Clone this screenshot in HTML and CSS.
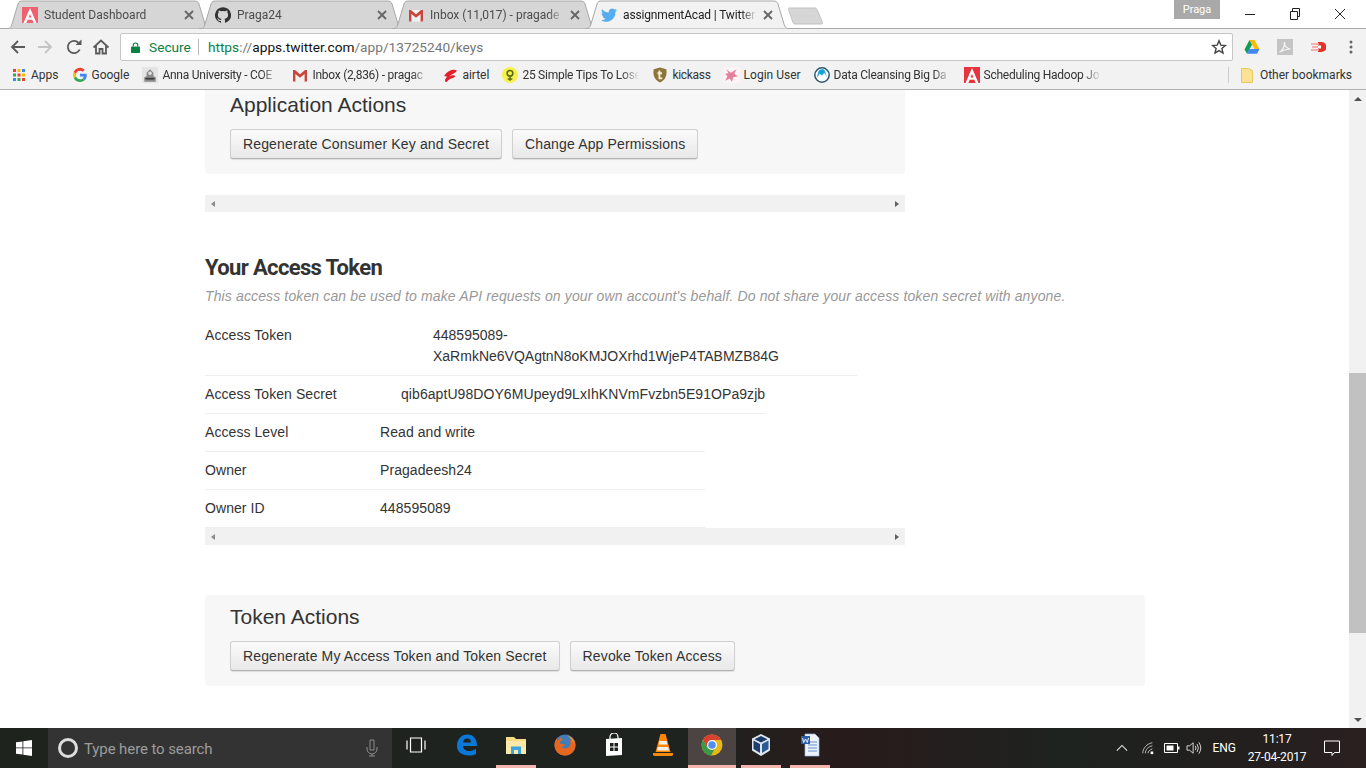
FILE: index.html
```html
<!DOCTYPE html>
<html>
<head>
    <title>assignmentAcad | Twitter Apps</title>
    <link rel="stylesheet" href="styles.css">
</head>
<body>
    <svg class="defs" width="0" height="0">
        <symbol id="fav-a" viewBox="0 0 16 16">
            <rect width="16" height="16" fill="#f0616f"/>
            <path d="M1.500 16 8 1l6.500 15h-2.800L8 7 4.300 16z" fill="#fff"/>
            <path d="M5 10.500h6v2.200H5z" fill="#fff"/>
        </symbol>
        <symbol id="fav-a-strong" viewBox="0 0 16 16">
            <rect width="16" height="16" fill="#e8343f"/>
            <path d="M1.500 16 8 1l6.500 15h-2.800L8 7 4.300 16z" fill="#fff"/>
            <path d="M5 10.500h6v2.200H5z" fill="#fff"/>
        </symbol>
        <symbol id="fav-gmail" viewBox="0 0 16 16">
            <path d="M1 3h14v11.500H1z" fill="#f1f1f1"/>
            <path d="M1 14.500V3h2l5 4.300L13 3h2v11.500h-2.400V7L8 10.800 3.400 7v7.500z" fill="#c9463d"/>
        </symbol>
        <symbol id="tab-shape" viewBox="0 0 205 29" preserveAspectRatio="none">
            <path d="M0 29C4 29 5 27 6 24L12 4C13 1.500 14 1 17 1H188C191 1 192 1.500 193 4L199 24C200 27 201 29 205 29z"/>
        </symbol>
    </svg>

    <header class="tabstrip">
        <div class="tab">
            <svg class="tab-bg"><use href="#tab-shape"/></svg>
            <svg class="favicon"><use href="#fav-a"/></svg>
            <span class="tab-title">Student Dashboard</span>
            <svg class="tab-close" viewBox="0 0 10 10"><path d="M1 1l8 8M9 1l-8 8"/></svg>
        </div>
        <div class="tab">
            <svg class="tab-bg"><use href="#tab-shape"/></svg>
            <svg class="favicon" viewBox="0 0 16 16"><path d="M8 .2a8 8 0 0 0-2.500 15.600c.4.1.5-.2.5-.4v-1.400c-2.200.5-2.700-1-2.700-1-.4-.9-.9-1.200-.9-1.200-.7-.5.1-.5.1-.5.8.1 1.200.8 1.200.8.7 1.200 1.900.9 2.300.7.1-.5.300-.9.500-1.100-1.800-.2-3.600-.9-3.600-4 0-.9.300-1.600.800-2.100-.1-.2-.4-1 .1-2.100 0 0 .7-.2 2.200.8a7.600 7.600 0 0 1 4 0c1.500-1 2.200-.8 2.200-.8.4 1.100.2 1.900.1 2.100.5.600.8 1.300.8 2.100 0 3.100-1.900 3.800-3.700 4 .3.300.6.800.6 1.500v2.200c0 .2.100.5.600.4A8 8 0 0 0 8 .2z" fill="#333"/></svg>
            <span class="tab-title">Praga24</span>
            <svg class="tab-close" viewBox="0 0 10 10"><path d="M1 1l8 8M9 1l-8 8"/></svg>
        </div>
        <div class="tab">
            <svg class="tab-bg"><use href="#tab-shape"/></svg>
            <svg class="favicon"><use href="#fav-gmail"/></svg>
            <span class="tab-title">Inbox (11,017) - pragade</span>
            <svg class="tab-close" viewBox="0 0 10 10"><path d="M1 1l8 8M9 1l-8 8"/></svg>
        </div>
        <div class="tab tab-active">
            <svg class="tab-bg"><use href="#tab-shape"/></svg>
            <svg class="favicon" viewBox="0 0 16 16"><path d="M16 3.100c-.6.3-1.200.4-1.900.5.700-.4 1.200-1 1.400-1.800-.6.400-1.300.6-2.100.8a3.300 3.300 0 0 0-5.600 3C5.100 5.500 2.700 4.200 1.100 2.200.2 3.700.7 5.600 2.100 6.600c-.5 0-1-.2-1.500-.4 0 1.600 1.100 3 2.600 3.300-.5.100-1 .1-1.500 0 .4 1.300 1.600 2.200 3.100 2.300A6.600 6.600 0 0 1 0 13.200 9.300 9.300 0 0 0 14.400 4.900c.6-.4 1.200-1 1.600-1.800z" fill="#55acee"/></svg>
            <span class="tab-title">assignmentAcad | Twitter</span>
            <svg class="tab-close" viewBox="0 0 10 10"><path d="M1 1l8 8M9 1l-8 8"/></svg>
        </div>
        <svg class="new-tab" viewBox="0 0 36 18"><path d="M1 1h26c1 0 1.500.5 2 1.500l5.500 13c.3 1 0 1.500-1 1.500H7c-1 0-1.500-.5-2-1.500L.5 2.500C.2 1.500 0 1 1 1z"/></svg>

        <div class="profile">Praga</div>
        <div class="win-controls">
            <svg viewBox="0 0 12 12"><path d="M1 6.500h10"/></svg>
            <svg viewBox="0 0 12 12"><path d="M1.500 3.500h7v8h-7zM3.500 3.500v-3h7v8h-2"/></svg>
            <svg viewBox="0 0 12 12"><path d="M1 1l10 10M11 1L1 11"/></svg>
        </div>
    </header>

    <nav class="toolbar">
        <svg class="tool" viewBox="0 0 16 16"><path class="nav-stroke" d="M15 8H2M8 2 2 8l6 6"/></svg>
        <svg class="tool tool-off" viewBox="0 0 16 16"><path class="nav-stroke" d="M1 8h13M8 2l6 6-6 6"/></svg>
        <svg class="tool tool-reload" viewBox="0 0 16 16"><path class="nav-stroke" d="M13.700 10.500A6.200 6.200 0 1 1 12.600 3.800"/><path d="M9.500 6h6V.5z" fill="#5a5a5a"/></svg>
        <svg class="tool" viewBox="0 0 16 16"><path class="nav-stroke" d="M.5 8.500 8 1.500l7.500 7M3 7v7.500h3.500V10h3v4.500H13V7"/></svg>
        <div class="omnibox">
            <svg class="lock" viewBox="0 0 10 12"><path d="M2.500 5V3.500a2.500 2.500 0 0 1 5 0V5" fill="none" stroke="#0b8043" stroke-width="1.300"/><rect y="5" width="10" height="7" rx=".8" fill="#0b8043"/></svg>
            <span class="secure">Secure</span>
            <span class="omni-sep"></span>
            <span class="url"><span class="url-scheme">https</span><span class="url-path">://</span>apps.twitter.com<span class="url-path">/app/13725240/keys</span></span>
            <svg class="star" viewBox="0 0 16 16"><path d="M8 1.800l1.800 4.300 4.600.4-3.500 3 1.100 4.500L8 11.600 4 14l1.100-4.500-3.500-3 4.600-.4z"/></svg>
        </div>
        <svg class="ext ext-first" viewBox="0 0 16 16"><path d="M5.500 1h5l5 9h-5z" fill="#fbbc05"/><path d="M5.500 1 .5 10.500l2.500 4.300 5-9z" fill="#0f9d58"/><path d="M3 14.800h10l2.500-4.800h-10z" fill="#4285f4"/></svg>
        <svg class="ext" viewBox="0 0 16 16"><rect width="16" height="16" fill="#c4c4c4"/><path d="M2.500 13c3-1.500 5-5.500 5-10 0 4 2 6.500 6 7-3.500 0-7 1-11 3z" fill="none" stroke="#f4f4f4" stroke-width="1.200"/></svg>
        <svg class="ext" viewBox="0 0 16 16"><path d="M8 3h3.500a5 5 0 0 1 0 10H8z" fill="#e4322b"/><path d="M1 5h8M2 8h8M1 11h8" stroke="#f59a94" stroke-width="1.300"/><path d="M8 6.500h3v3H8z" fill="#fff"/></svg>
        <svg class="ext menu-dots" viewBox="0 0 16 16"><circle cx="8" cy="3" r="1.500"/><circle cx="8" cy="8" r="1.500"/><circle cx="8" cy="13" r="1.500"/></svg>
    </nav>

    <div class="bookmarks">
        <div class="bm">
            <svg class="bm-icon" viewBox="0 0 16 16">
                <path d="M2 2h3v3H2z" fill="#ea4335"/><path d="M6.500 2h3v3h-3z" fill="#fbbc05"/><path d="M11 2h3v3h-3z" fill="#4285f4"/>
                <path d="M2 6.500h3v3H2z" fill="#34a853"/><path d="M6.500 6.500h3v3h-3z" fill="#ea4335"/><path d="M11 6.500h3v3h-3z" fill="#fbbc05"/>
                <path d="M2 11h3v3H2z" fill="#4285f4"/><path d="M6.500 11h3v3h-3z" fill="#34a853"/><path d="M11 11h3v3h-3z" fill="#ea4335"/>
            </svg>
            <span>Apps</span>
        </div>
        <div class="bm">
            <svg class="bm-icon" viewBox="0 0 14 14">
                <path d="M12.900 7.200c0-.4 0-.9-.1-1.300H7v2.500h3.300a2.900 2.900 0 0 1-1.200 1.800l1.900 1.500c1.200-1 1.900-2.600 1.900-4.500z" fill="#4285f4"/>
                <path d="M7 13.200c1.700 0 3-.6 4-1.500l-1.900-1.500c-.5.400-1.200.6-2.100.6-1.600 0-3-1.100-3.500-2.600l-2 1.500a6 6 0 0 0 5.500 3.500z" fill="#34a853"/>
                <path d="M3.500 8.200a3.600 3.600 0 0 1 0-2.400l-2-1.600a6 6 0 0 0 0 5.500z" fill="#fbbc05"/>
                <path d="M7 3.200c.9 0 1.700.3 2.400.9l1.700-1.700A6 6 0 0 0 1.500 4.200l2 1.600C4 4.300 5.400 3.200 7 3.200z" fill="#ea4335"/>
            </svg>
            <span>Google</span>
        </div>
        <div class="bm">
            <svg class="bm-icon" viewBox="0 0 14 14"><rect width="14" height="14" fill="#e4e4e4"/><path d="M2 13V9l2-1V5l3-3 3 3v3l2 1v4z" fill="#8a8a8a"/><path d="M3 9.500h8v1.500H3z" fill="#3c3c3c"/><circle cx="7" cy="5.500" r="1.500" fill="#e4e4e4"/></svg>
            <span class="bm-clip">Anna University - COE</span>
        </div>
        <div class="bm">
            <svg class="bm-icon"><use href="#fav-gmail"/></svg>
            <span class="bm-clip">Inbox (2,836) - pragac</span>
        </div>
        <div class="bm">
            <svg class="bm-icon" viewBox="0 0 14 14"><path d="M2 7.500C5 3 10 1.500 13 3c-1 2.500-5 3-6.500 5.500 2-1.500 4.500-1.500 5-.5-1 2-4 1.500-6 3.500-1 1-1.500 2-2.500 1.500C2 12 3 10 4.500 8.500 3.500 8.500 2.500 8.500 2 7.500z" fill="#e3202c"/></svg>
            <span>airtel</span>
        </div>
        <div class="bm">
            <svg class="bm-icon" viewBox="0 0 14 14"><circle cx="7" cy="7" r="7" fill="#f4f24e"/><circle cx="7" cy="5.500" r="2.500" fill="none" stroke="#5f6a1a" stroke-width="1.400"/><path d="M7 8v4M5 10.500h4" stroke="#5f6a1a" stroke-width="1.300"/></svg>
            <span class="bm-clip">25 Simple Tips To Lose</span>
        </div>
        <div class="bm">
            <svg class="bm-icon" viewBox="0 0 14 14"><path d="M1.500 2 7 .5 12.500 2c1 5.500-1 9.500-5.500 11.500C2.500 11.500.5 7.500 1.500 2z" fill="#8c7536"/><path d="M6.500 3v7h2.500M4.800 5.500h4" fill="none" stroke="#f4efe0" stroke-width="1.600"/></svg>
            <span class="bm-tight">kickass</span>
        </div>
        <div class="bm">
            <svg class="bm-icon" viewBox="0 0 14 14"><rect width="14" height="14" fill="#fbf3f5"/><path d="M2 2l4 3 5-3-2 4 3 2-4 1-1 4-2-3-4 2 2-4-2-2 3-.5z" fill="#e57f9c"/></svg>
            <span>Login User</span>
        </div>
        <div class="bm">
            <svg class="bm-icon" viewBox="0 0 14 14"><circle cx="7" cy="7" r="6.300" fill="#fff" stroke="#2a5870" stroke-width="1.300"/><path d="M2.500 9.500 5 6l2 1.500L9 5l2.500 4.500C9.500 4 10 2 7 2S3.500 5 2.500 9.500z" fill="#13a2dd"/></svg>
            <span class="bm-clip">Data Cleansing Big Da</span>
        </div>
        <div class="bm">
            <svg class="bm-icon"><use href="#fav-a-strong"/></svg>
            <span class="bm-clip">Scheduling Hadoop Jo</span>
        </div>
        <div class="bm-sep"></div>
        <div class="bm bm-other">
            <svg class="folder" viewBox="0 0 12 16"><path d="M.5 1.500h7l4 2v12H.5z" fill="#fde293" stroke="#e8c565"/></svg>
            <span>Other bookmarks</span>
        </div>
    </div>

    <div class="viewport">
        <main class="content">
            <section class="well well-top">
                <h3>Application Actions</h3>
                <div class="actions">
                    <button class="btn">Regenerate Consumer Key and Secret</button>
                    <button class="btn">Change App Permissions</button>
                </div>
            </section>
            <div class="hscroll hscroll-first"><span class="arrow-left"></span><span class="arrow-right"></span></div>

            <h2>Your Access Token</h2>
            <p class="hint">This access token can be used to make API requests on your own account's behalf. Do not share your access token secret with anyone.</p>

            <div class="row row-token">
                <span class="key">Access Token</span>
                <span class="val">448595089-<br>XaRmkNe6VQAgtnN8oKMJOXrhd1WjeP4TABMZB84G</span>
            </div>
            <div class="row row-secret">
                <span class="key">Access Token Secret</span>
                <span class="val">qib6aptU98DOY6MUpeyd9LxIhKNVmFvzbn5E91OPa9zjb</span>
            </div>
            <div class="row">
                <span class="key">Access Level</span>
                <span class="val">Read and write</span>
            </div>
            <div class="row">
                <span class="key">Owner</span>
                <span class="val">Pragadeesh24</span>
            </div>
            <div class="row">
                <span class="key">Owner ID</span>
                <span class="val">448595089</span>
            </div>
            <div class="hscroll"><span class="arrow-left"></span><span class="arrow-right"></span></div>

            <section class="well well-token">
                <h3>Token Actions</h3>
                <div class="actions">
                    <button class="btn">Regenerate My Access Token and Token Secret</button>
                    <button class="btn">Revoke Token Access</button>
                </div>
            </section>
        </main>
        <aside class="vscroll">
            <span class="arrow-up"></span>
            <div class="thumb"></div>
            <span class="arrow-down"></span>
        </aside>
    </div>

    <footer class="taskbar">
        <div class="start">
            <svg viewBox="0 0 16 16"><path d="M0 2.300 6.500 1.400V7.500H0zM7.300 1.300 16 0V7.500H7.300zM0 8.300H6.500V14.600L0 13.700zM7.300 8.300H16V16L7.300 14.700z" fill="#fff"/></svg>
        </div>
        <div class="search">
            <span class="cortana"></span>
            <span class="search-text">Type here to search</span>
            <svg class="mic" viewBox="0 0 12 18"><path d="M4 1h4v10H4zM1 8v2a5 5 0 0 0 10 0V8M6 15v2M3 17h6" fill="none" stroke="#8d8d8d"/></svg>
        </div>
        <div class="task task-view">
            <svg viewBox="0 0 20 16"><path d="M4.500 1h11v14h-11zM1 3.500v9M19 3.500v9" fill="none" stroke="#fff" stroke-width="1.200"/></svg>
        </div>
        <div class="task">
            <svg viewBox="0 0 22 24"><path d="M1 13C1 6 5.500 1.500 11.500 1.500 17.500 1.500 21 6 21 13H7c.3 3 2.500 5 6 5 2.500 0 4.500-.7 7-2.300v5.300c-2 1.200-4.500 1.500-7 1.500C6 22.500 1 19 1 13zm6-3.500h8C15 7 13.500 5.500 11 5.500S7.500 7 7 9.500z" fill="#0a78d7"/></svg>
        </div>
        <div class="task task-open">
            <svg viewBox="0 0 22 20"><path d="M1 2h8l2 2h10v15H1z" fill="#f8dd84"/><path d="M1 6h20v13H1z" fill="#fbe9a9"/><path d="M6 11.500h10V19h-3v-4H9v4H6z" fill="#3aa5de"/></svg>
        </div>
        <div class="task">
            <svg viewBox="0 0 22 22"><circle cx="11" cy="11" r="10.500" fill="#3f7dbb"/><path d="M13 1c4 1 8.500 4.500 8.500 10 0 6-4.500 10.500-10.500 10.500S.5 17 .5 11c0-3 1-5 2.500-7 0 1.500.5 2.500 1 3 .5-1.500 2-3 3.500-4-.5 1 0 2 1 2.500 0 1-1.500 1.500-2.500 2.500-.5 1 .5 2 1.500 2 1.500 0 2 1 3.500 0 0 2-2.500 3-4 2.500 2 2.500 6 2.500 8 .5 2-2 2-5 .5-7.500 1 .5 1.500 1 2 2-.5-3-2-5.500-3.500-7z" fill="#e9661e"/><path d="M14 2c3 1 6 4 6.500 8-1-3-3-5-6.500-8z" fill="#f5c33c"/></svg>
        </div>
        <div class="task">
            <svg viewBox="0 0 20 24"><path d="M6 7V4a4 4 0 0 1 8 0v3" fill="none" stroke="#fff" stroke-width="1.200"/><path d="M2 6l16-1v17L2 23z" fill="#fff"/><path d="M6 10h3.500v3.500H6zM10.500 10H14v3.500h-3.500zM6 14.500h3.500V18H6zM10.500 14.500H14V18h-3.500z" fill="#1f221f"/></svg>
        </div>
        <div class="task">
            <svg viewBox="0 0 20 24"><path d="M7.500 1h5l5 18h-15z" fill="#ff8800"/><path d="M6.400 8h7.200l.8 3.500H5.600zM4.800 14h10.400l.8 3.500H4z" fill="#f1f1f1"/><path d="M0 20h20v1.500q0 1.500-2 1.500H2q-2 0-2-1.500z" fill="#f18b0f"/></svg>
        </div>
        <div class="task task-open task-current">
            <svg viewBox="0 0 22 22"><circle cx="11" cy="11" r="10.500" fill="#e7b914"/><path d="M11 .5A10.500 10.500 0 0 0 2 5.700L6.500 14 11 6h9.100A10.500 10.500 0 0 0 11 .5z" fill="#d8402f"/><path d="M2 5.700A10.500 10.500 0 0 0 10 21.500L14.700 13 11 15.500 6.500 14z" fill="#3b9a47"/><circle cx="11" cy="11" r="5" fill="#fff"/><circle cx="11" cy="11" r="3.800" fill="#4e8ff0"/></svg>
        </div>
        <div class="task task-open">
            <svg viewBox="0 0 22 24"><path d="M11 1l9 4.500v12L11 23l-9-5.500v-12z" fill="#dfe7f1"/><path d="M11 3 17.500 6.200 11 9.500 4.500 6.200z" fill="#1a3b68"/><path d="M3.500 7.500 10 11v9l-6.500-4z" fill="#1d3f70"/><path d="M18.500 7.500 12 11v9l6.500-4z" fill="#2c5b94"/></svg>
        </div>
        <div class="task task-open">
            <svg viewBox="0 0 20 24"><path d="M5 1h10l4 4v18H5z" fill="#eef3fb" stroke="#9db8dc" stroke-width=".7"/><path d="M8 9h9M8 12h9M8 15h9M8 18h9" stroke="#5f8fce"/><path d="M1 3h9v8H1z" fill="#2b5ea8"/><path d="M2.500 5l1.200 4.500L5.500 6l1.800 3.500L8.500 5" fill="none" stroke="#fff" stroke-width=".9"/></svg>
        </div>
        <div class="tray">
            <svg class="chev" viewBox="0 0 14 8"><path d="M1 7l6-6 6 6"/></svg>
            <svg class="tray-icon" viewBox="0 0 16 16"><path d="M2 14C2 8 7 3 13 2M5 14c0-4 3-7.500 8-8.500M8 14c0-2 2-4 5-5" fill="none" stroke="#cfcfcf"/><path d="M11 12h3v3h-3z" fill="#fff"/></svg>
            <svg class="tray-icon batt" viewBox="0 0 16 12"><path d="M.5 1.500h13v9H.5z" fill="none" stroke="#fff"/><path d="M2.500 3.500h7v5h-7z" fill="#fff"/><path d="M14 4.500h1.500v3H14z" fill="#fff"/></svg>
            <svg class="tray-icon" viewBox="0 0 18 16"><path d="M1 5.500h3L8 2v12l-4-3.500H1zM10.500 5.500q1.500 2.500 0 5M12.500 3.500q3 4.500 0 9M14.500 1.500q4.500 6.500 0 13" fill="none" stroke="#e8e8e8"/></svg>
            <span class="lang">ENG</span>
            <div class="clock"><span>11:17</span><span>27-04-2017</span></div>
            <svg class="notify" viewBox="0 0 16 16"><path d="M.5 1h15v11.500h-5l-2.500 3v-3H.5z" fill="none" stroke="#fff"/></svg>
        </div>
    </footer>
</body>
</html>
```

FILE: styles.css
```css
html, body {
    height: 100%;
}

body {
    margin: 0;
    width: 1366px;
    height: 768px;
    overflow: hidden;
    display: flex;
    flex-direction: column;
    background-color: white;
    font-family: "Liberation Sans", Arial, sans-serif;
    color: #333;
}

.defs {
    position: absolute;
}

/* browser tabs */
.tabstrip {
    height: 28px;
    flex: none;
    display: flex;
    padding-left: 6px;
    border-bottom: 1px solid #a8a8a8;
    background-color: white;
    font-family: Roboto, sans-serif;
    font-size: 12px;
    position: relative;
}

.tab {
    width: 205px;
    height: 29px;
    margin-right: -12px;
    padding: 1px 17px 0 16px;
    box-sizing: border-box;
    display: flex;
    align-items: center;
    flex: none;
    position: relative;
    color: #4c4c4c;
}

.tab-bg {
    position: absolute;
    left: 0;
    top: 0;
    width: 205px;
    height: 29px;
    fill: #d6d6d6;
    stroke: #a8a8a8;
}

.tab-active {
    color: #222;
}

.tab-active .tab-bg {
    fill: #f2f2f2;
}

.tab-active .tab-title {
    letter-spacing: -0.15px;
}

.favicon {
    width: 16px;
    height: 16px;
    margin-right: 6px;
    flex: none;
    position: relative;
}

.tab-title {
    flex: 1;
    white-space: nowrap;
    overflow: hidden;
    position: relative;
    -webkit-mask-image: linear-gradient(90deg, #000 88%, transparent);
    mask-image: linear-gradient(90deg, #000 88%, transparent);
}

.tab-close {
    width: 10px;
    height: 10px;
    flex: none;
    margin-left: 6px;
    position: relative;
    fill: none;
    stroke: #666;
    stroke-width: 1.800;
}

.new-tab {
    width: 36px;
    height: 18px;
    margin: 7px 0 0 10px;
    flex: none;
    fill: #d6d6d6;
    stroke: #c2c2c2;
}

.profile {
    width: 46px;
    height: 19px;
    margin-left: auto;
    line-height: 20px;
    background-color: #a9a9a9;
    color: white;
    font-size: 11px;
    text-align: center;
}

.win-controls {
    display: flex;
    width: 146px;
    padding: 8px 0 0 24px;
    box-sizing: border-box;
    gap: 33px;
}

.win-controls svg {
    width: 12px;
    height: 12px;
    fill: none;
    stroke: #222;
    stroke-width: 1;
}

/* toolbar */
.toolbar {
    height: 33px;
    flex: none;
    display: flex;
    align-items: center;
    padding: 4px 0 1px 10px;
    box-sizing: border-box;
    background-color: #f2f2f2;
    font-family: Roboto, sans-serif;
}

.tool {
    width: 16px;
    height: 16px;
    margin-right: 11px;
    flex: none;
}

.tool-reload {
    margin-left: 2px;
}

.nav-stroke {
    fill: none;
    stroke: #5a5a5a;
    stroke-width: 1.800;
}

.tool-off .nav-stroke {
    stroke: #c4c4c4;
}

.omnibox {
    width: 1113px;
    height: 28px;
    box-sizing: border-box;
    display: flex;
    align-items: center;
    padding: 0 5px 0 10px;
    background-color: white;
    border: 1px solid #c6c6c6;
    border-radius: 2px;
    font-size: 13.700px;
}

.lock {
    width: 9px;
    height: 11px;
    margin-right: 9px;
    flex: none;
}

.secure {
    color: #0b8043;
}

.omni-sep {
    width: 1px;
    height: 16px;
    margin: 0 9px 0 7px;
    background-color: #bbb;
}

.url {
    color: #111;
    flex: 1;
}

.url-scheme {
    color: #0b8043;
}

.url-path {
    color: #777;
}

.star {
    width: 16px;
    height: 16px;
    fill: none;
    stroke: #444;
    stroke-width: 1.400;
}

.ext {
    width: 16px;
    height: 16px;
    flex: none;
    margin-left: 17px;
}

.ext-first {
    margin-left: 11px;
}

.menu-dots {
    fill: #666;
}

/* bookmarks bar */
.bookmarks {
    height: 28px;
    flex: none;
    display: flex;
    align-items: center;
    gap: 13px;
    padding: 0 0 1px 11px;
    box-sizing: border-box;
    background-color: #f2f2f2;
    border-bottom: 1px solid #b2b2b2;
    font-family: Roboto, sans-serif;
    font-size: 12px;
    color: #333;
}

.bm {
    display: flex;
    align-items: center;
    flex: none;
}

.bm-icon {
    width: 16px;
    height: 16px;
    margin-right: 4px;
    flex: none;
}

.folder {
    width: 12px;
    height: 16px;
    margin-right: 7px;
    flex: none;
}

.bm-clip {
    width: 117px;
    white-space: nowrap;
    overflow: hidden;
    letter-spacing: -0.25px;
    -webkit-mask-image: linear-gradient(90deg, #000 85%, transparent);
    mask-image: linear-gradient(90deg, #000 85%, transparent);
}

.bm-tight {
    letter-spacing: -0.3px;
}

.bm-sep {
    width: 1px;
    height: 16px;
    margin-left: auto;
    background-color: #ccc;
}

.bm-other {
    margin-right: 14px;
    margin-left: -1px;
}

/* page */
.viewport {
    flex: 1;
    min-height: 0;
    display: flex;
}

.content {
    flex: 1;
    padding-left: 205px;
    overflow: hidden;
    font-size: 14px;
}

.well {
    padding: 0 25px 15px;
    box-sizing: border-box;
    background-color: #f7f7f7;
    border-radius: 4px;
}

.well-top {
    width: 700px;
    padding-top: 4px;
    border-radius: 0 0 4px 4px;
}

.well-token {
    width: 940px;
    margin-top: 50px;
    padding-top: 11px;
}

.well h3 {
    margin: 0 0 13px;
    font-size: 21px;
    font-weight: normal;
    line-height: 22px;
}

.actions {
    display: flex;
    gap: 10px;
}

.btn {
    height: 30px;
    padding: 0 12px;
    border: 1px solid #d0d0d0;
    border-bottom-color: #b3b3b3;
    border-radius: 3px;
    background-image: linear-gradient(#fbfbfb, #e8e8e8);
    box-shadow: 0 1px 1px rgba(0, 0, 0, 0.1);
    font-family: "Liberation Sans", Arial, sans-serif;
    font-size: 14px;
    letter-spacing: 0.14px;
    color: #333;
}

.hscroll {
    width: 700px;
    height: 17px;
    display: flex;
    align-items: center;
    justify-content: space-between;
    padding: 0 6px;
    box-sizing: border-box;
    background-color: #f1f1f1;
}

.hscroll-first {
    margin-top: 21px;
}

.arrow-left {
    border-style: solid;
    border-width: 3.500px 4px 3.500px 0;
    border-color: transparent #8a8a8a transparent transparent;
}

.arrow-right {
    border-style: solid;
    border-width: 3.500px 0 3.500px 4px;
    border-color: transparent transparent transparent #606060;
}

h2 {
    margin: 42px 0 0;
    font-family: Roboto, sans-serif;
    font-size: 22px;
    font-weight: 700;
    letter-spacing: -0.65px;
    line-height: 28px;
}

.hint {
    margin: 4px 0 10px;
    color: #999;
    font-style: italic;
    letter-spacing: 0.13px;
    line-height: 20px;
    width: 940px;
}

.row {
    width: 500px;
    display: flex;
    padding: 8px 0;
    box-sizing: border-box;
    line-height: 21px;
    letter-spacing: 0.07px;
    border-bottom: 1px solid #eee;
}

.row:last-of-type {
    border-bottom-color: white;
}

.key {
    width: 175px;
    flex: none;
}

.row-token {
    width: 652px;
    padding-top: 9px;
}

.row-token .key {
    width: 228px;
}

.row-token .val {
    letter-spacing: 0;
}

.row-secret {
    width: 560px;
}

.row-secret .key {
    width: 196px;
}

/* page scrollbar */
.vscroll {
    width: 17px;
    flex: none;
    display: flex;
    flex-direction: column;
    align-items: center;
    background-color: #f1f1f1;
}

.arrow-up {
    margin-top: 7px;
    border-style: solid;
    border-width: 0 4px 4px;
    border-color: transparent transparent #505050;
}

.thumb {
    width: 100%;
    height: 260px;
    margin-top: 272px;
    background-color: #c1c1c1;
}

.arrow-down {
    margin-top: auto;
    margin-bottom: 6px;
    border-style: solid;
    border-width: 4px 4px 0;
    border-color: #505050 transparent transparent;
}

/* windows taskbar */
.taskbar {
    height: 40px;
    flex: none;
    display: flex;
    background-image: linear-gradient(90deg, #1f231e 0%, #1f231f 50%, #281b1b 62%, #1e2320 78%, #221f1e 90%, #2a2020 100%);
    color: white;
    font-family: Roboto, sans-serif;
}

.start {
    width: 48px;
    display: flex;
    align-items: center;
    justify-content: center;
}

.start svg {
    width: 16px;
    height: 16px;
}

.search {
    width: 344px;
    display: flex;
    align-items: center;
    padding: 0 12px 0 10px;
    box-sizing: border-box;
    background-color: #333;
}

.cortana {
    width: 14px;
    height: 14px;
    margin-right: 6px;
    flex: none;
    border: 3px solid #ddd;
    border-radius: 50%;
}

.search-text {
    flex: 1;
    padding-top: 2px;
    color: #9c9c9c;
    font-size: 15px;
    letter-spacing: -0.1px;
}

.mic {
    width: 12px;
    height: 18px;
    margin-right: 2px;
}

.task {
    width: 40px;
    margin-right: 9px;
    display: flex;
    align-items: center;
    justify-content: center;
    box-sizing: border-box;
    flex: none;
    padding-bottom: 3px;
    border-bottom: 3px solid transparent;
}

.task svg {
    width: 22px;
    height: 24px;
}

.task-view {
    margin-left: 4px;
    margin-right: 11px;
}

.task-view svg {
    width: 20px;
    height: 16px;
}

.task-open {
    border-bottom-color: #f4b5ae;
}

.task-current {
    width: 48px;
    margin: 0 5px 0 -4px;
    background-color: #4b4442;
}

.tray {
    margin-left: auto;
    display: flex;
    align-items: center;
    font-size: 12px;
}

.chev {
    width: 12px;
    height: 8px;
    margin-right: 12px;
    fill: none;
    stroke: #e8e8e8;
    stroke-width: 1.200;
}

.tray-icon {
    width: 16px;
    height: 14px;
    margin-right: 8px;
}

.batt {
    margin-right: 6px;
}

.lang {
    margin-left: 2px;
}

.clock {
    width: 78px;
    margin-left: 2px;
    display: flex;
    flex-direction: column;
    align-items: center;
    line-height: 18px;
    letter-spacing: -0.2px;
}

.notify {
    width: 16px;
    height: 16px;
    margin: 0 26px 0 8px;
}
```
